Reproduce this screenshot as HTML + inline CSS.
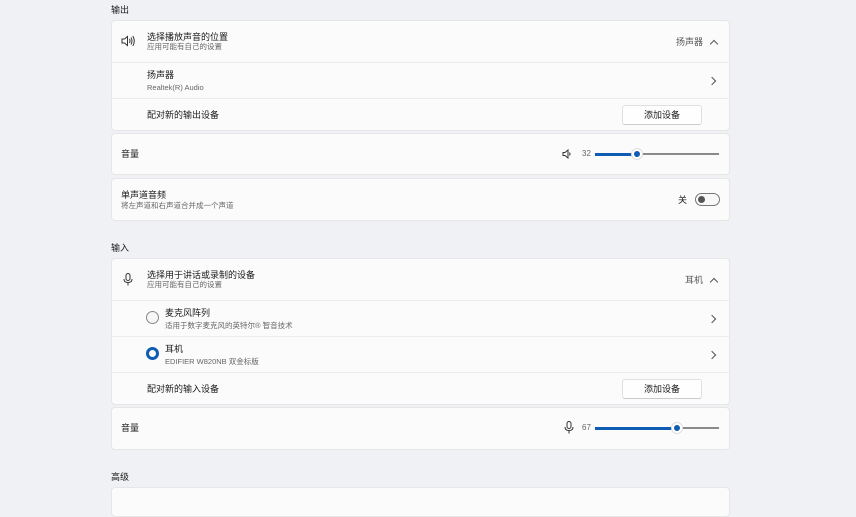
<!DOCTYPE html><html><head><meta charset="utf-8"><style>
*{margin:0;padding:0;box-sizing:border-box}
body{width:856px;height:500px;overflow:hidden;background:#eff1f4;font-family:"Liberation Sans","Noto Sans CJK SC",sans-serif;color:#1a1a1a;position:relative;line-height:1.35}
.a{position:absolute}
.card{position:absolute;left:111px;width:619px;background:#fbfbfb;border:1px solid #e6e6e6;border-radius:4px}
.sep{position:absolute;left:111px;width:619px;height:1px;background:#ebebeb}
.t{position:absolute;font-size:9px;color:#1a1a1a}
.s{position:absolute;font-size:7.5px;color:#666}
.lbl{position:absolute;left:111px;font-size:9px;color:#1a1a1a}
.btn{position:absolute;left:622px;width:80px;height:20px;background:#fefefe;border:1px solid #e0e0e0;border-bottom-color:#ccc;border-radius:3px;font-size:9px;text-align:center;line-height:18px}
.chev{position:absolute;width:6px;height:6px;border-right:1px solid #555;border-top:1px solid #555}
</style></head><body>
<div class="lbl" style="top:4px">输出</div>
<div class="card" style="top:20px;height:111px"></div>
<div class="sep" style="top:62px"></div><div class="sep" style="top:98px"></div>
<svg class="a" style="left:121px;top:35px" width="14" height="12" viewBox="0 0 14 12" fill="none" stroke="#333" stroke-width="1"><path d="M1 4h2.5L6.5 1.5v9L3.5 8H1z"/><path d="M8.5 4q1 2 0 4M10 2.5q2 3.5 0 7M11.8 1q3 5 0 10"/></svg>
<div class="t" style="left:147px;top:31px">选择播放声音的位置</div>
<div class="s" style="left:147px;top:42px">应用可能有自己的设置</div>
<div class="a" style="left:676px;top:36px;font-size:9px;color:#555">扬声器</div>
<div class="chev" style="left:711px;top:41px;transform:rotate(-45deg)"></div>
<div class="t" style="left:147px;top:69px">扬声器</div>
<div class="s" style="left:147px;top:83px">Realtek(R) Audio</div>
<div class="chev" style="left:709px;top:78px;transform:rotate(45deg)"></div>
<div class="t" style="left:147px;top:109px">配对新的输出设备</div>
<div class="btn" style="top:105px">添加设备</div>

<div class="card" style="top:133px;height:42px"></div>
<div class="t" style="left:121px;top:148px">音量</div>
<svg class="a" style="left:562px;top:149px" width="10" height="10" viewBox="0 0 10 10" fill="none" stroke="#333" stroke-width="1"><path d="M1 3.5h2L6 1v8L3 6.5H1z"/><path d="M7.5 3.5q1 1.5 0 3"/></svg>
<div class="a" style="left:582px;top:149px;font-size:8px;color:#666">32</div>
<div class="a" style="left:595px;top:153px;width:124px;height:2px;background:#8a8a8a"></div>
<div class="a" style="left:595px;top:153px;width:42px;height:3px;background:#0f5cb5"></div>
<div class="a" style="left:631px;top:148px;width:12px;height:12px;border-radius:50%;background:#fff;border:1px solid #ddd"></div>
<div class="a" style="left:634px;top:151px;width:6px;height:6px;border-radius:50%;background:#0f5cb5"></div>

<div class="card" style="top:178px;height:43px"></div>
<div class="t" style="left:121px;top:189px">单声道音频</div>
<div class="s" style="left:121px;top:201px">将左声道和右声道合并成一个声道</div>
<div class="a" style="left:678px;top:194px;font-size:9px">关</div>
<div class="a" style="left:695px;top:193px;width:25px;height:13px;border-radius:7px;border:1px solid #777;background:#f8f8f8"></div>
<div class="a" style="left:698px;top:196px;width:7px;height:7px;border-radius:50%;background:#555"></div>

<div class="lbl" style="top:242px">输入</div>
<div class="card" style="top:258px;height:147px"></div>
<div class="sep" style="top:300px"></div><div class="sep" style="top:336px"></div><div class="sep" style="top:372px"></div>
<svg class="a" style="left:123px;top:273px" width="10" height="13" viewBox="0 0 10 13" fill="none" stroke="#333" stroke-width="1"><rect x="3" y="0.5" width="4" height="7" rx="2"/><path d="M1 6q0 3.5 4 3.5t4-3.5M5 9.5V12.5"/></svg>
<div class="t" style="left:147px;top:269px">选择用于讲话或录制的设备</div>
<div class="s" style="left:147px;top:280px">应用可能有自己的设置</div>
<div class="a" style="left:685px;top:274px;font-size:9px;color:#555">耳机</div>
<div class="chev" style="left:711px;top:279px;transform:rotate(-45deg)"></div>
<div class="a" style="left:146px;top:311px;width:13px;height:13px;border-radius:50%;border:1px solid #888;background:#f6f6f6"></div>
<div class="t" style="left:165px;top:307px">麦克风阵列</div>
<div class="s" style="left:165px;top:321px">适用于数字麦克风的英特尔® 智音技术</div>
<div class="chev" style="left:709px;top:316px;transform:rotate(45deg)"></div>
<div class="a" style="left:146px;top:347px;width:13px;height:13px;border-radius:50%;border:3.5px solid #0f5cb5;background:#fff"></div>
<div class="t" style="left:165px;top:343px">耳机</div>
<div class="s" style="left:165px;top:357px">EDIFIER W820NB 双金标版</div>
<div class="chev" style="left:709px;top:352px;transform:rotate(45deg)"></div>
<div class="t" style="left:147px;top:383px">配对新的输入设备</div>
<div class="btn" style="top:379px">添加设备</div>

<div class="card" style="top:407px;height:43px"></div>
<div class="t" style="left:121px;top:422px">音量</div>
<svg class="a" style="left:564px;top:421px" width="10" height="13" viewBox="0 0 10 13" fill="none" stroke="#333" stroke-width="1"><rect x="3" y="0.5" width="4" height="7" rx="2"/><path d="M1 6q0 3.5 4 3.5t4-3.5M5 9.5V12.5"/></svg>
<div class="a" style="left:582px;top:423px;font-size:8px;color:#666">67</div>
<div class="a" style="left:595px;top:427px;width:124px;height:2px;background:#8a8a8a"></div>
<div class="a" style="left:595px;top:427px;width:82px;height:3px;background:#0f5cb5"></div>
<div class="a" style="left:671px;top:422px;width:12px;height:12px;border-radius:50%;background:#fff;border:1px solid #ddd"></div>
<div class="a" style="left:674px;top:425px;width:6px;height:6px;border-radius:50%;background:#0f5cb5"></div>

<div class="lbl" style="top:471px">高级</div>
<div class="card" style="top:487px;height:30px"></div>
</body></html>
